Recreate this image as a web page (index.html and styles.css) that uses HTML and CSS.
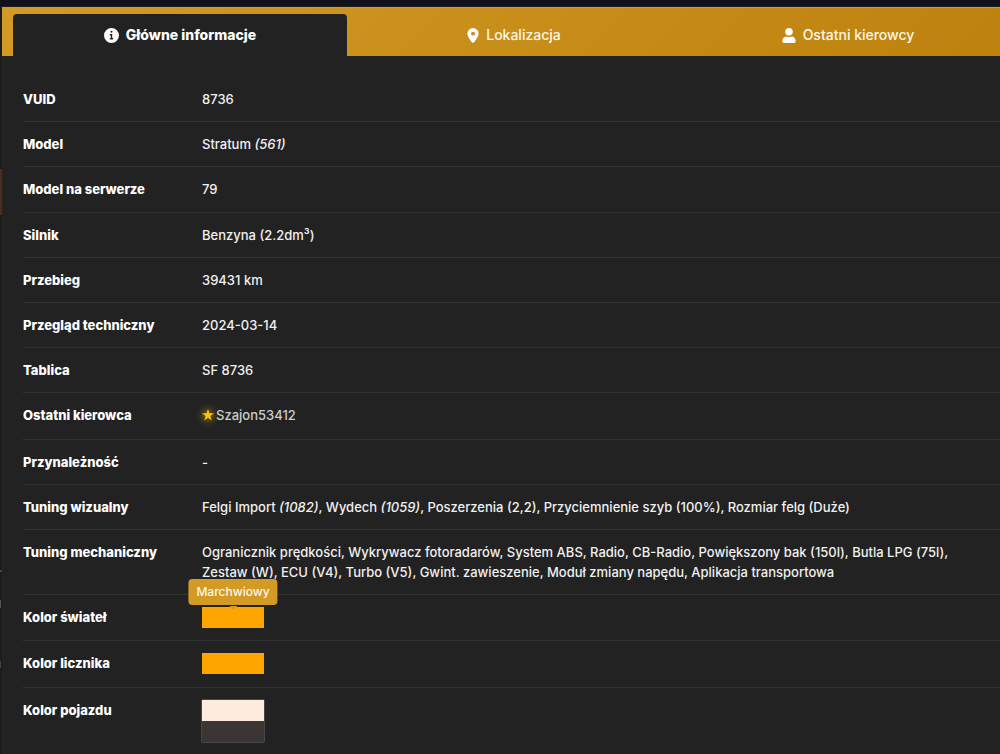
FILE: index.html
```html
<!DOCTYPE html>
<html lang="pl">
<head>
<meta charset="utf-8">
<meta name="viewport" content="width=device-width, initial-scale=1">
<title>Informacje o pojeździe</title>
<link rel="stylesheet" href="styles.css">
</head>
<body class="page">
<main class="panel">
  <div class="tabs" role="tablist">
    <button class="tab tab-active" type="button" role="tab" aria-selected="true">
      <svg class="icon" viewBox="0 0 512 512" aria-hidden="true"><path fill-rule="evenodd" d="M256 0a256 256 0 1 0 0 512a256 256 0 1 0 0-512zM256 96a34 34 0 1 1 0 68a34 34 0 1 1 0-68zM216 208h64v136h16c13 0 24 11 24 24s-11 24-24 24h-80c-13 0-24-11-24-24s11-24 24-24h16v-88h-16c-13 0-24-11-24-24s11-24 24-24z"/></svg>
      Główne informacje
    </button>
    <button class="tab" type="button" role="tab" aria-selected="false">
      <svg class="icon icon-pin" viewBox="0 0 384 512" aria-hidden="true"><path fill-rule="evenodd" d="M216 499C267 435 384 279 384 192a192 192 0 1 0-384 0c0 87 117 243 168 307c12 15 36 15 48 0zM192 124a68 68 0 1 1 0 136a68 68 0 1 1 0-136z"/></svg>
      Lokalizacja
    </button>
    <button class="tab" type="button" role="tab" aria-selected="false">
      <svg class="icon icon-user" viewBox="0 0 448 512" aria-hidden="true"><path d="M224 256a128 128 0 1 0 0-256a128 128 0 1 0 0 256zM314 288c-28 13-57 20-90 20s-62-7-90-20C60 288 0 348 0 422v42c0 27 21 48 48 48h352c27 0 48-21 48-48v-42c0-74-60-134-134-134z"/></svg>
      Ostatni kierowcy
    </button>
  </div>
  <table class="details">
    <tbody>
      <tr><th scope="row">VUID</th><td>8736</td></tr>
      <tr><th scope="row">Model</th><td>Stratum <i>(561)</i></td></tr>
      <tr><th scope="row">Model na serwerze</th><td>79</td></tr>
      <tr><th scope="row">Silnik</th><td>Benzyna (2.2dm³)</td></tr>
      <tr><th scope="row">Przebieg</th><td>39431 km</td></tr>
      <tr><th scope="row">Przegląd techniczny</th><td>2024-03-14</td></tr>
      <tr><th scope="row">Tablica</th><td>SF 8736</td></tr>
      <tr><th scope="row">Ostatni kierowca</th><td><a class="driver" href="#"><svg class="star" viewBox="0 0 24 24" aria-hidden="true"><path d="M12 0l3 8.600h9l-7.200 5.500 2.700 8.900L12 17.700 4.500 23l2.700-8.900L0 8.600h9z"/></svg>Szajon53412</a></td></tr>
      <tr><th scope="row">Przynależność</th><td>-</td></tr>
      <tr><th scope="row">Tuning wizualny</th><td>Felgi Import <i>(1082)</i>, Wydech <i>(1059)</i>, Poszerzenia (2,2), Przyciemnienie szyb (100%), Rozmiar felg (Duże)</td></tr>
      <tr><th scope="row">Tuning mechaniczny</th><td>Ogranicznik prędkości, Wykrywacz fotoradarów, System ABS, Radio, CB-Radio, Powiększony bak (150l), Butla LPG (75l), Zestaw (W), ECU (V4), Turbo (V5), Gwint. zawieszenie, Moduł zmiany napędu, Aplikacja transportowa</td></tr>
      <tr><th scope="row">Kolor świateł</th><td><div class="swatch swatch-orange"><span class="tooltip" role="tooltip">Marchwiowy</span></div></td></tr>
      <tr><th scope="row">Kolor licznika</th><td><div class="swatch swatch-orange"></div></td></tr>
      <tr><th scope="row">Kolor pojazdu</th><td><div class="paint"><div class="swatch swatch-cream"></div><div class="swatch swatch-graphite"></div></div></td></tr>
    </tbody>
  </table>
</main>
</body>
</html>
```
FILE: styles.css
```css
* { box-sizing: border-box; }

.page {
  margin: 0;
  min-height: 100vh;
  display: flex;
  padding: 7px 0 0 2px;
  overflow-x: hidden;
  color: #f0f0f0;
  font: 500 13px/20px Inter, "Noto Sans", sans-serif;
  background:
    linear-gradient(#12101b, #12101b) 0 0 / 100% 6px no-repeat,
    linear-gradient(#4a2d1c, #4a2d1c) 0 169px / 2px 46px no-repeat,
    linear-gradient(#5a4314, #5a4314) 0 570px / 2px 2px no-repeat,
    linear-gradient(#555, #555) 0 600px / 1px 8px no-repeat,
    linear-gradient(#4a443a, #4a443a) 0 661px / 1px 7px no-repeat,
    #1c1c1c;
}

.panel {
  flex: 1;
  min-width: 0;
  margin-right: -15px;
  display: flex;
  flex-direction: column;
  background: #222;
}

.tabs {
  display: grid;
  grid-template-columns: repeat(3, 1fr);
  padding: 6px 0 0 11px;
  background: linear-gradient(135deg, #d39a26, #bd820d);
  border-top: 1px solid #d69a25;
}

.tab {
  display: flex;
  align-items: center;
  justify-content: center;
  gap: 7px;
  height: 42px;
  padding: 0;
  border: 0;
  border-radius: 4px 4px 0 0;
  background: none;
  color: #fff7e6;
  font: 500 14px/20px Inter, "Noto Sans", sans-serif;
  cursor: pointer;
}

.tab-active {
  background: #222;
  color: #fff;
  font-weight: 800;
}

.icon {
  width: 15px;
  height: 15px;
  fill: #fff;
}

.icon-pin { width: 12px; }
.icon-user { width: 14px; }

.details {
  flex: 1;
  margin: 21px 0 0 21px;
  border-collapse: separate;
  border-spacing: 0;
}

.details th,
.details td {
  padding: 12px 0;
  border-bottom: 1px solid #333;
  text-align: left;
  vertical-align: top;
}

.details th {
  width: 179px;
  color: #fff;
  font-weight: 800;
}

.details td { padding-right: 40px; }

.details tr:last-child th,
.details tr:last-child td { border-bottom: 0; }

.driver {
  display: inline-flex;
  align-items: center;
  gap: 2px;
  color: #ccc;
  text-decoration: none;
}

.star {
  width: 12px;
  height: 12px;
  fill: #ffc107;
  filter: drop-shadow(0 0 4px #ffc107);
}

.swatch {
  position: relative;
  width: 62px;
  height: 21px;
}

.swatch-orange { background: #ffa500; }
.swatch-cream { background: #feebde; }
.swatch-graphite { background: #3b3536; }

.paint {
  width: 62px;
  border-radius: 1px;
  box-shadow: 0 0 0 1px #484646;
}

.tooltip {
  position: absolute;
  bottom: calc(100% + 2px);
  left: 50%;
  transform: translateX(-50%);
  padding: 3px 8px;
  border-radius: 4px;
  background: #d39a26;
  color: #fff7e6;
  font-size: 12px;
}

.tooltip::after {
  content: "";
  position: absolute;
  top: calc(100% + 1px);
  left: 50%;
  transform: translateX(-50%);
  border: 4px solid transparent;
  border-top-color: #d39a26;
  border-bottom: 0;
}
```
